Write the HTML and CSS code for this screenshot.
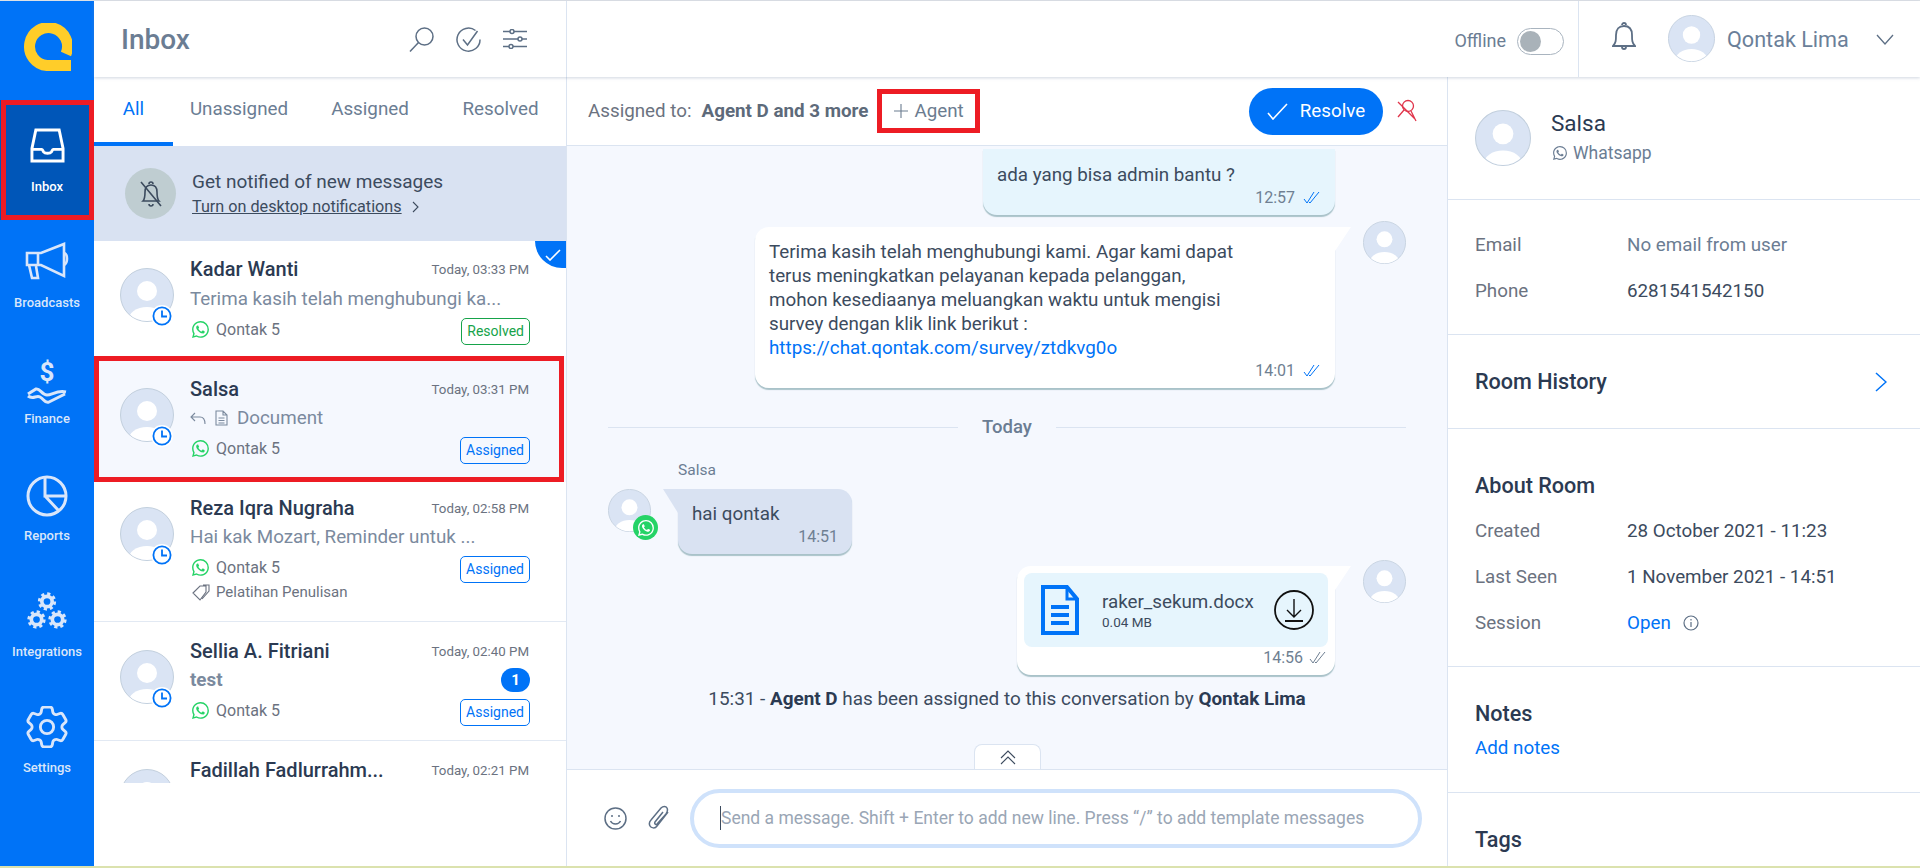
FILE: index.html
```html
<!DOCTYPE html>
<html lang="en">
<head>
	<meta charset="utf-8" />
	<title>Qontak Inbox</title>
	<link rel="stylesheet" href="styles.css">
</head>
<body>
	<svg class="defs" width="0" height="0">
		<defs>
			<clipPath id="avatarClip"><circle cx="27" cy="27" r="26"/></clipPath>
			<symbol id="avatar" viewBox="0 0 54 54">
				<circle cx="27" cy="27" r="26.5" fill="#dae4f4" stroke="#c2cfdd"/>
				<g clip-path="url(#avatarClip)" fill="#fff">
					<circle cx="27" cy="23" r="10"/>
					<ellipse cx="27" cy="53" rx="19" ry="14"/>
				</g>
			</symbol>
			<symbol id="whatsapp" viewBox="0 0 16 16">
				<path fill="currentColor" d="M13.601 2.326A7.854 7.854 0 0 0 7.994 0C3.627 0 .068 3.558.064 7.926c0 1.399.366 2.76 1.057 3.965L0 16l4.204-1.102a7.933 7.933 0 0 0 3.79.965h.004c4.368 0 7.926-3.558 7.93-7.93A7.898 7.898 0 0 0 13.6 2.326zM7.994 14.521a6.573 6.573 0 0 1-3.356-.92l-.24-.144-2.494.654.666-2.433-.156-.251a6.56 6.56 0 0 1-1.007-3.505c0-3.626 2.957-6.584 6.591-6.584a6.56 6.56 0 0 1 4.66 1.931 6.557 6.557 0 0 1 1.928 4.66c-.004 3.639-2.961 6.592-6.592 6.592zm3.615-4.934c-.197-.099-1.17-.578-1.353-.646-.182-.065-.315-.099-.445.099-.133.197-.513.646-.627.775-.114.133-.232.148-.43.05-.197-.1-.836-.308-1.592-.985-.59-.525-.985-1.175-1.103-1.372-.114-.198-.011-.304.088-.403.087-.088.197-.232.296-.346.1-.114.133-.198.198-.33.065-.134.034-.248-.015-.347-.05-.099-.445-1.076-.612-1.47-.16-.389-.323-.335-.445-.34-.114-.007-.247-.007-.38-.007a.729.729 0 0 0-.529.247c-.182.198-.691.677-.691 1.654 0 .977.71 1.916.81 2.049.098.133 1.394 2.132 3.383 2.992.47.205.84.326 1.129.418.475.152.904.129 1.246.08.38-.058 1.171-.48 1.338-.943.164-.464.164-.86.114-.943-.049-.084-.182-.133-.38-.232z"/>
			</symbol>
			<symbol id="clock" viewBox="0 0 22 22">
				<circle cx="11" cy="11" r="11" fill="#fff"/>
				<circle cx="11" cy="11" r="8.6" fill="#fff" stroke="#0073f7" stroke-width="1.8"/>
				<path d="M11 5.5V11.5H16" fill="none" stroke="#0073f7" stroke-width="1.8"/>
			</symbol>
			<symbol id="ticks" viewBox="0 0 18 14">
				<path d="M1 8l3 4 7-11M6 11l1 1 9-11" fill="none" stroke="currentColor" stroke-width="1"/>
			</symbol>
			<symbol id="gear" viewBox="0 0 22 22">
				<circle cx="11" cy="11" r="8.8" fill="none" stroke="currentColor" stroke-width="3.6" stroke-dasharray="3.6 3.3"/>
				<circle cx="11" cy="11" r="6" fill="none" stroke="currentColor" stroke-width="4.200"/>
			</symbol>
		</defs>
	</svg>

	<div class="app">
		<nav class="sidebar">
			<div class="logo">
				<svg width="50" height="50" viewBox="0 0 50 50"><path d="M44 31A19 19 0 1 0 25 42.5H49" fill="none" stroke="#ffcd29" stroke-width="11"/></svg>
			</div>
			<a class="nav-item active">
				<svg width="35" height="35" viewBox="0 0 36 36" fill="none" stroke="currentColor" stroke-width="3"><path d="M6 2H30L34 21V34H2V21z"/><path d="M2 22H12C13 22 13 23 14 24.500 14.700 25.500 15.500 26 18 26S21.300 25.500 22 24.500C23 23 23 22 24 22H34"/></svg>
				<span>Inbox</span>
				<i class="mark"></i>
			</a>
			<a class="nav-item">
				<svg width="44" height="38" viewBox="0 0 44 38" fill="none" stroke="currentColor" stroke-width="2.6"><path d="M2 11H16L39 2V34L16 23H2z"/><path d="M13 11V23M4 23L7 36H13L11 24M39 11C43 12 43 21 39 23"/></svg>
				<span>Broadcasts</span>
			</a>
			<a class="nav-item">
				<svg width="44" height="46" viewBox="0 0 44 46" fill="none" stroke="currentColor" stroke-width="3"><text x="22" y="22" font-family="Roboto" font-size="26" font-weight="700" text-anchor="middle" fill="currentColor" stroke="none">$</text><path d="M3 35L11 30C15 29 17 36 22 36S32 31 41 33M3 37C8 41 11 36 15 38S20 45 24 43L40 35"/></svg>
				<span>Finance</span>
			</a>
			<a class="nav-item">
				<svg width="42" height="42" viewBox="0 0 42 42" fill="none" stroke="currentColor" stroke-width="3"><circle cx="21" cy="21" r="19"/><path d="M19 2V21H40M19 21L33 36"/></svg>
				<span>Reports</span>
			</a>
			<a class="nav-item">
				<svg class="gears" width="42" height="37" viewBox="0 0 42 37"><use href="#gear" x="11.500" y="0" width="19" height="19"/><use href="#gear" x="1" y="18" width="19" height="19"/><use href="#gear" x="22" y="18" width="19" height="19"/></svg>
				<span>Integrations</span>
			</a>
			<a class="nav-item nav-settings">
				<svg width="42" height="42" viewBox="2.500 2.500 19 19" fill="none" stroke="currentColor" stroke-width="1.300"><path d="M9.594 3.940c.09-.542.56-.94 1.110-.94h2.593c.55 0 1.020.398 1.110.94l.213 1.281c.063.374.313.686.645.870.074.04.147.083.22.127.325.196.72.257 1.075.124l1.217-.456a1.125 1.125 0 0 1 1.370.49l1.296 2.247a1.125 1.125 0 0 1-.26 1.431l-1.003.827c-.293.241-.438.613-.43.992a7.723 7.723 0 0 1 0 .255c-.008.378.137.75.43.991l1.004.827c.424.35.534.955.26 1.430l-1.298 2.247a1.125 1.125 0 0 1-1.369.491l-1.217-.456c-.355-.133-.75-.072-1.076.124a6.470 6.470 0 0 1-.22.128c-.331.183-.581.495-.644.869l-.213 1.281c-.09.543-.56.94-1.110.94h-2.594c-.55 0-1.019-.398-1.110-.94l-.213-1.281c-.062-.374-.312-.686-.644-.87a6.520 6.520 0 0 1-.22-.127c-.325-.196-.72-.257-1.076-.124l-1.217.456a1.125 1.125 0 0 1-1.369-.49l-1.297-2.247a1.125 1.125 0 0 1 .26-1.431l1.004-.827c.292-.24.437-.613.43-.991a6.932 6.932 0 0 1 0-.255c.007-.38-.138-.751-.43-.992l-1.004-.827a1.125 1.125 0 0 1-.26-1.430l1.297-2.247a1.125 1.125 0 0 1 1.370-.491l1.216.456c.356.133.751.072 1.076-.124.072-.044.146-.086.22-.128.332-.183.582-.495.644-.869l.214-1.280z"/><circle cx="12" cy="12" r="3"/></svg>
				<span>Settings</span>
			</a>
		</nav>

		<div class="main">
			<header class="topbar">
				<div class="topbar-left">
					<h1>Inbox</h1>
					<div class="topbar-tools">
						<svg width="25" height="25" viewBox="0 0 25 25" fill="none" stroke="#5d6f85" stroke-width="1.500"><circle cx="15.500" cy="9.500" r="8.500"/><path d="M9.500 15.500L1 24.500"/></svg>
						<svg width="25" height="25" viewBox="0 0 25 25" fill="none" stroke="#5d6f85" stroke-width="1.500"><path d="M19.500 3.500A11.500 11.500 0 1 0 24 12.500"/><path d="M7 12.500L11.500 18L21.500 4"/></svg>
						<svg width="24" height="20" viewBox="0 0 24 20" fill="none" stroke="#5d6f85" stroke-width="1.500"><path d="M0 2.500H24M0 10H24M0 17.500H24"/><circle cx="9" cy="2.500" r="2" fill="#fff"/><circle cx="17" cy="10" r="2" fill="#fff"/><circle cx="8" cy="17.500" r="2" fill="#fff"/></svg>
					</div>
				</div>
				<div class="topbar-right">
					<div class="status">
						<span>Offline</span>
						<span class="toggle"><i></i></span>
					</div>
					<div class="user">
						<svg class="bell" width="24" height="29" viewBox="0 0 24 29" fill="none" stroke="#5d6f85" stroke-width="1.800"><path d="M1 24C4 21 4 18 4 13C4 7 7 4 12 4S20 7 20 13C20 18 20 21 23 24z"/><path d="M10 3a2 2 0 0 1 4 0M10 25a2 2 0 0 0 4 0"/></svg>
						<svg class="user-avatar" width="47" height="47"><use href="#avatar"/></svg>
						<span class="user-name">Qontak Lima</span>
						<svg width="18" height="11" viewBox="0 0 18 11" fill="none" stroke="#5d6f85" stroke-width="1.300"><path d="M1 1L9 10L17 1"/></svg>
					</div>
				</div>
			</header>

			<div class="panes">
				<section class="list-pane">
					<div class="tabs">
						<a class="tab active">All</a>
						<a class="tab">Unassigned</a>
						<a class="tab">Assigned</a>
						<a class="tab">Resolved</a>
					</div>
					<div class="notify">
						<div class="notify-icon">
							<svg width="26" height="28" viewBox="0 0 26 28" fill="none" stroke="#3c4b5e" stroke-width="1.600"><path d="M5 21C7 19 7 16 7 12C7 7 9 5 13 5S19 7 19 12C19 16 19 19 21 21z"/><path d="M11 24a2 2 0 0 0 4 0M11 4a2 2 0 0 1 4 0M3 2L23 26"/></svg>
						</div>
						<div>
							<div class="notify-title">Get notified of new messages</div>
							<div class="notify-link"><u>Turn on desktop notifications</u><svg width="7" height="12" viewBox="0 0 7 12" fill="none" stroke="#3c4b5e" stroke-width="1.100"><path d="M1 1L6 6L1 11"/></svg></div>
						</div>
					</div>
					<div class="rooms">
						<article class="room room-kadar">
							<span class="room-check"><svg width="16" height="12" viewBox="0 0 16 12" fill="none" stroke="#fff" stroke-width="1.600"><path d="M1 7L5 11L15 1"/></svg></span>
							<div class="room-avatar"><svg width="54" height="54"><use href="#avatar"/></svg><svg class="room-clock" width="22" height="22"><use href="#clock"/></svg></div>
							<div class="room-body">
								<div class="room-line"><strong class="room-name">Kadar Wanti</strong><time>Today, 03:33 PM</time></div>
								<div class="room-preview">Terima kasih telah menghubungi ka...</div>
								<div class="room-line room-channel"><span class="channel"><svg class="wa" width="17" height="17"><use href="#whatsapp"/></svg>Qontak 5</span><span class="badge resolved">Resolved</span></div>
							</div>
						</article>
						<article class="room room-salsa">
							<div class="room-avatar"><svg width="54" height="54"><use href="#avatar"/></svg><svg class="room-clock" width="22" height="22"><use href="#clock"/></svg></div>
							<div class="room-body">
								<div class="room-line"><strong class="room-name">Salsa</strong><time>Today, 03:31 PM</time></div>
								<div class="room-preview doc-preview">
									<svg width="16" height="13" viewBox="0 0 16 13" fill="none" stroke="#7b8a9e" stroke-width="1.100"><path d="M5 1L1 5L5 9M1 5H10C13 5 15 7 15 12"/></svg>
									<svg width="13" height="16" viewBox="0 0 13 16" fill="none" stroke="#7b8a9e" stroke-width="1.100"><path d="M1 1H8L12 5V15H1zM8 1V5H12M3.500 8H9.500M3.500 10.500H9.500M3.500 13H9.500"/></svg>
									Document
								</div>
								<div class="room-line room-channel"><span class="channel"><svg class="wa" width="17" height="17"><use href="#whatsapp"/></svg>Qontak 5</span><span class="badge">Assigned</span></div>
							</div>
							<i class="mark"></i>
						</article>
						<article class="room room-reza">
							<div class="room-avatar"><svg width="54" height="54"><use href="#avatar"/></svg><svg class="room-clock" width="22" height="22"><use href="#clock"/></svg></div>
							<div class="room-body">
								<div class="room-line"><strong class="room-name">Reza Iqra Nugraha</strong><time>Today, 02:58 PM</time></div>
								<div class="room-preview">Hai kak Mozart, Reminder untuk ...</div>
								<div class="room-line room-channel"><span class="channel"><svg class="wa" width="17" height="17"><use href="#whatsapp"/></svg>Qontak 5</span><span class="badge">Assigned</span></div>
								<div class="room-tag"><svg width="18" height="17" viewBox="0 0 18 17" fill="none" stroke="#6b7280" stroke-width="1.100"><path d="M1 9L8 2H14V8L8 16zM11 1H17V7L10 15"/></svg>Pelatihan Penulisan</div>
							</div>
						</article>
						<article class="room room-sellia">
							<div class="room-avatar"><svg width="54" height="54"><use href="#avatar"/></svg><svg class="room-clock" width="22" height="22"><use href="#clock"/></svg></div>
							<div class="room-body">
								<div class="room-line"><strong class="room-name">Sellia A. Fitriani</strong><time>Today, 02:40 PM</time></div>
								<div class="room-line room-unread"><span class="room-preview unread">test</span><span class="count">1</span></div>
								<div class="room-line room-channel"><span class="channel"><svg class="wa" width="17" height="17"><use href="#whatsapp"/></svg>Qontak 5</span><span class="badge">Assigned</span></div>
							</div>
						</article>
						<article class="room room-fadillah">
							<div class="room-avatar"><svg width="54" height="54"><use href="#avatar"/></svg></div>
							<div class="room-body">
								<div class="room-line"><strong class="room-name">Fadillah Fadlurrahm...</strong><time>Today, 02:21 PM</time></div>
							</div>
						</article>
					</div>
				</section>

				<section class="chat-pane">
					<div class="chat-head">
						<span class="assigned-label">Assigned to:</span>
						<strong class="assigned-names">Agent D and 3 more</strong>
						<span class="add-agent"><svg width="14" height="14" viewBox="0 0 14 14" stroke="#6b7c90" stroke-width="1.100"><path d="M7 0V14M0 7H14"/></svg>Agent<i class="mark"></i></span>
						<button class="resolve"><svg width="21" height="17" viewBox="0 0 21 17" fill="none" stroke="#fff" stroke-width="1.600"><path d="M1 10L6 16L20 1"/></svg>Resolve</button>
						<svg class="unpin" width="24" height="24" viewBox="0 0 24 24" fill="none" stroke="#e0344a" stroke-width="1.300"><circle cx="13" cy="7" r="5.500"/><path d="M9 11L3 18M16 12L21 22M3 3L20 20"/></svg>
					</div>

					<div class="chat-scroll">
						<div class="msg out first">
							<div class="bubble tinted">
								<p>ada yang bisa admin bantu ?</p>
								<div class="meta">12:57<svg class="tick" width="18" height="14"><use href="#ticks"/></svg></div>
							</div>
						</div>
						<div class="msg out">
							<div class="bubble tailed long">
								<p>Terima kasih telah menghubungi kami. Agar kami dapat<br>terus meningkatkan pelayanan kepada pelanggan,<br>mohon kesediaanya meluangkan waktu untuk mengisi<br>survey dengan klik link berikut :<br><a href="#">https://chat.qontak.com/survey/ztdkvg0o</a></p>
								<div class="meta">14:01<svg class="tick" width="18" height="14"><use href="#ticks"/></svg></div>
							</div>
							<svg class="msg-avatar" width="43" height="43"><use href="#avatar"/></svg>
						</div>
						<div class="day"><span>Today</span></div>
						<div class="sender">Salsa</div>
						<div class="msg in">
							<div class="msg-from">
								<svg width="43" height="43"><use href="#avatar"/></svg>
								<span class="wa-dot"><svg width="16" height="16"><use href="#whatsapp"/></svg></span>
							</div>
							<div class="bubble incoming">
								<p>hai qontak</p>
								<div class="meta">14:51</div>
							</div>
						</div>
						<div class="msg out file-msg">
							<div class="bubble tailed file-bubble">
								<div class="file">
									<svg width="38" height="50" viewBox="0 0 38 50" fill="none" stroke="#0073f7"><path d="M2 2H26L36 14V48H2z" stroke-width="4"/><path d="M26 2V14H36" stroke-width="3"/><path d="M10 22H28M10 30H28M10 38H28" stroke-width="4"/></svg>
									<div class="file-info">
										<div class="file-name">raker_sekum.docx</div>
										<div class="file-size">0.04 MB</div>
									</div>
									<svg width="40" height="40" viewBox="0 0 40 40" fill="none" stroke="#111"><circle cx="20" cy="20" r="19" stroke-width="1.800"/><path d="M20 9V26M13 20L20 27L27 20" stroke-width="1.400"/><path d="M11 31H29" stroke-width="2"/></svg>
								</div>
								<div class="meta">14:56<svg class="tick read" width="18" height="14"><use href="#ticks"/></svg></div>
							</div>
							<svg class="msg-avatar" width="43" height="43"><use href="#avatar"/></svg>
						</div>
						<div class="system">15:31 - <b>Agent D</b> has been assigned to this conversation by <b>Qontak Lima</b></div>
						<div class="collapse-tab"><svg width="16" height="15" viewBox="0 0 16 15" fill="none" stroke="#3c4b5e" stroke-width="1.100"><path d="M1 8L8 1L15 8M1 14L8 7L15 14"/></svg></div>
					</div>

					<div class="composer">
						<svg width="23" height="25" viewBox="0 0 23 25" fill="none" stroke="#5d6f85" stroke-width="1.500"><circle cx="11.500" cy="12.500" r="10.500"/><circle cx="8" cy="10" r="1" fill="#5d6f85" stroke="none"/><circle cx="15" cy="10" r="1" fill="#5d6f85" stroke="none"/><path d="M6.500 15C8.500 19 14.500 19 16.500 15"/></svg>
						<svg width="23" height="26" viewBox="0 0 23 26" fill="none" stroke="#5d6f85" stroke-width="1.500"><path d="M20 7L9 21C7 24 3 23 2 21S1 17 3 15L13 3C15 1 18 1 19 3S20 6 18 9L9 19C8 20 6 19 7 17L15 7"/></svg>
						<div class="input"><i class="caret"></i><span>Send a message. Shift + Enter to add new line. Press “/” to add template messages</span></div>
					</div>
				</section>

				<aside class="info-pane">
					<div class="info-block contact">
						<svg width="56" height="56"><use href="#avatar"/></svg>
						<div class="contact-text">
							<div class="contact-name">Salsa</div>
							<div class="contact-channel"><svg width="14" height="14"><use href="#whatsapp"/></svg>Whatsapp</div>
						</div>
					</div>
					<div class="info-block fields fields-contact">
						<div class="field"><span>Email</span><span class="muted">No email from user</span></div>
						<div class="field"><span>Phone</span><span class="val">6281541542150</span></div>
					</div>
					<div class="info-block history">
						<h2>Room History</h2>
						<svg width="12" height="20" viewBox="0 0 12 20" fill="none" stroke="#0073f7" stroke-width="1.500"><path d="M1 1L11 10L1 19"/></svg>
					</div>
					<div class="info-block about">
						<h2>About Room</h2>
						<div class="field"><span>Created</span><span class="val">28 October 2021 - 11:23</span></div>
						<div class="field"><span>Last Seen</span><span class="val">1 November 2021 - 14:51</span></div>
						<div class="field"><span>Session</span><span class="session"><a href="#">Open</a><svg width="16" height="16" viewBox="0 0 16 16" fill="none" stroke="#5d6f85" stroke-width="1.200"><circle cx="8" cy="8" r="7"/><path d="M8 7V12M8 4V5.500"/></svg></span></div>
					</div>
					<div class="info-block notes">
						<h2>Notes</h2>
						<a href="#">Add notes</a>
					</div>
					<div class="info-block tags">
						<h2>Tags</h2>
					</div>
				</aside>
			</div>
		</div>
	</div>
	<div class="page-edge"></div>
</body>
</html>
```
FILE: styles.css
```css
* {
	box-sizing: border-box;
}
html, body {
	height: 100%;
}
body {
	margin: 0;
	overflow: hidden;
	background: #fff;
	font-family: Roboto, sans-serif;
	color: #2b3a52;
}
a {
	color: #0073f7;
	text-decoration: none;
}
p, h1, h2 {
	margin: 0;
}
svg {
	display: block;
	flex: none;
}
i {
	font-style: normal;
}
.defs {
	position: absolute;
}
.app {
	display: flex;
	height: 866px;
	border-top: 1px solid #dde1e6;
}
.page-edge {
	height: 2px;
	background: #dbe2ae;
}
/* red boxes drawn over the screenshot */
.mark {
	position: absolute;
	border: 5px solid #ed1c24;
	pointer-events: none;
}

/* sidebar */
.sidebar {
	width: 94px;
	flex: none;
	background: #0073f7;
	color: #d9e6fa;
}
.logo {
	display: flex;
	justify-content: center;
	height: 99px;
	padding-top: 22px;
}
.nav-item {
	position: relative;
	display: flex;
	flex-direction: column;
	align-items: center;
	height: 116.4px;
	padding: 26px 0 23px;
	color: inherit;
	font-size: 13px;
	line-height: 15px;
	font-weight: 500;
}
.nav-item span {
	margin-top: auto;
	white-space: nowrap;
}
.nav-item.active {
	background: #0056b8;
	color: #fff;
	height: 120px;
	margin-bottom: -3.6px;
	padding: 28px 0 26px;
	z-index: 1;
}
.nav-settings {
	padding-top: 24px;
}
.nav-item .mark {
	inset: 0 0 0 1px;
}
.gears {
	color: #d9e6fa;
}

/* top bar */
.main {
	flex: 1;
	display: flex;
	flex-direction: column;
	min-width: 0;
}
.topbar {
	display: flex;
	height: 76px;
	flex: none;
	box-shadow: 0 1px 3px rgba(120, 140, 170, .35);
	position: relative;
	z-index: 2;
	background: #fff;
}
.topbar-left {
	width: 473px;
	flex: none;
	display: flex;
	align-items: center;
	padding: 0 39px 0 27px;
	border-right: 1px solid #dbe4f1;
}
h1 {
	font-size: 28px;
	font-weight: 500;
	color: #6b7d93;
}
.topbar-tools {
	margin-left: auto;
	display: flex;
	align-items: center;
	gap: 22px;
}
.topbar-right {
	flex: 1;
	display: flex;
	justify-content: flex-end;
}
.status {
	display: flex;
	align-items: center;
	gap: 11px;
	padding: 2px 14px 0 0;
	border-right: 1px solid #dbe4f1;
	font-size: 18px;
	color: #6b7d93;
}
.toggle {
	width: 47px;
	height: 27px;
	border: 1px solid #a9b4bf;
	border-radius: 14px;
	padding: 2px;
	margin-top: 2px;
}
.toggle i {
	display: block;
	width: 21px;
	height: 21px;
	border-radius: 50%;
	background: #a9b2b9;
}
.user {
	display: flex;
	align-items: center;
	padding-left: 33px;
	width: 341px;
	flex: none;
	font-size: 21.6px;
	color: #6b7f99;
}
.bell {
	margin-top: -6px;
}
.user-avatar {
	margin-left: 32px;
	margin-top: -1px;
}
.user-name {
	margin-left: 12px;
	margin-right: 27px;
	white-space: nowrap;
}

/* list */
.panes {
	flex: 1;
	display: flex;
	min-height: 0;
}
.list-pane {
	width: 473px;
	flex: none;
	border-right: 1px solid #dbe4f1;
	display: flex;
	flex-direction: column;
}
.tabs {
	display: flex;
	height: 69px;
	flex: none;
}
.tab {
	color: #6b7d93;
	font-size: 18.8px;
	padding-top: 21px;
	text-align: center;
}
.tab:nth-child(1) { width: 79px; color: #0073f7; border-bottom: 4px solid #0073f7; }
.tab:nth-child(2) { width: 132px; }
.tab:nth-child(3) { width: 130px; }
.tab:nth-child(4) { width: 131px; }
.notify {
	height: 95px;
	flex: none;
	background: #d9e2f2;
	display: flex;
	align-items: center;
	padding-left: 31px;
	gap: 16px;
}
.notify-icon {
	width: 51px;
	height: 51px;
	border-radius: 50%;
	background: #bfcdd1;
	display: flex;
	align-items: center;
	justify-content: center;
}
.notify-title {
	font-size: 19px;
	line-height: 24px;
	color: #3c4b5e;
}
.notify-link {
	display: flex;
	align-items: center;
	gap: 10px;
	font-size: 16.2px;
	line-height: 20px;
	margin-top: 3px;
	color: #3c4b5e;
}
.rooms {
	height: 542px;
	overflow: hidden;
	flex: none;
}
.room {
	position: relative;
	display: flex;
	padding: 16px 36px 0 26px;
	border-bottom: 1px solid #e2e9f3;
	gap: 16px;
}
.room-kadar { height: 115px; border-bottom: 0; }
.room-salsa { height: 126px; background: #f5f8fe; padding-top: 21px; border-bottom: 0; }
.room-reza { height: 140px; padding-top: 14px; }
.room-sellia { height: 119px; padding-top: 17px; }
.room-fadillah { height: 80px; padding-top: 17px; }
.room .mark {
	inset: 0 2px 0 0;
}
.room-avatar {
	position: relative;
	width: 54px;
	height: 54px;
	margin-top: 11px;
	flex: none;
}
.room-clock {
	position: absolute;
	right: 1px;
	bottom: -5px;
}
.room-body {
	flex: 1;
	min-width: 0;
}
.room-line {
	display: flex;
	justify-content: space-between;
	align-items: center;
	height: 24px;
}
.room-name {
	font-size: 20px;
	font-weight: 500;
	color: #2b3a52;
}
time {
	font-size: 13.3px;
	margin-right: 1px;
	color: #6b7280;
}
.room-preview {
	font-size: 18.8px;
	line-height: 24px;
	margin-top: 5px;
	color: #7b8a9e;
}
.room-kadar .room-preview {
	margin-top: 6px;
}
.doc-preview {
	display: flex;
	align-items: center;
	gap: 9px;
	height: 24px;
}
.unread {
	font-weight: 700;
	margin-top: 0;
}
.room-unread {
	margin-top: 5px;
}
.count {
	width: 29px;
	height: 24px;
	border-radius: 12px;
	background: #0073f7;
	color: #fff;
	font-size: 15px;
	font-weight: 700;
	text-align: center;
	line-height: 24px;
}
.room-channel {
	margin-top: 6px;
}
.channel {
	display: flex;
	align-items: center;
	gap: 7px;
	font-size: 16px;
	color: #6b7280;
	margin-left: 2px;
}
.wa {
	color: #25d366;
}
.badge {
	height: 27px;
	padding: 0 5px;
	border: 1px solid #0073f7;
	border-radius: 5px;
	color: #0073f7;
	font-size: 14px;
	line-height: 25px;
	margin-top: 5px;
}
.badge.resolved {
	border-color: #16a34a;
	color: #16a34a;
}
.room-tag {
	display: flex;
	align-items: center;
	gap: 6px;
	margin: 4px 0 0 2px;
	font-size: 15px;
	color: #6b7280;
}
.room-check {
	position: absolute;
	top: 0;
	right: 0;
	width: 31px;
	height: 27px;
	background: #0073f7;
	border-bottom-left-radius: 27px;
	display: flex;
	align-items: center;
	justify-content: center;
	padding-left: 4px;
}

/* chat */
.chat-pane {
	width: 881px;
	flex: none;
	display: flex;
	flex-direction: column;
	border-right: 1px solid #dbe4f1;
}
.chat-head {
	display: flex;
	align-items: center;
	height: 69px;
	flex: none;
	padding: 0 28px 0 21px;
	border-bottom: 1px solid #dbe4f1;
	font-size: 18.8px;
	color: #6b7280;
}
.assigned-names {
	margin-left: 10px;
	font-weight: 700;
	color: #5d6a7a;
}
.add-agent {
	position: relative;
	display: flex;
	align-items: center;
	gap: 6px;
	margin-left: 9px;
	height: 44px;
	width: 103px;
	padding-left: 17px;
	color: #6b7c90;
}
.add-agent .mark {
	inset: 0;
}
.resolve {
	display: flex;
	align-items: center;
	justify-content: center;
	gap: 12px;
	margin-left: auto;
	width: 134px;
	height: 47px;
	border: 0;
	border-radius: 24px;
	background: #0073f7;
	color: #fff;
	font: 18.8px Roboto, sans-serif;
}
.unpin {
	margin-left: 12px;
}
.chat-scroll {
	position: relative;
	height: 623px;
	flex: none;
	background: #f5f8fe;
	padding: 3px 41px 0;
	overflow: hidden;
}
.msg {
	display: flex;
	align-items: flex-start;
	gap: 28px;
}
.msg.out {
	justify-content: flex-end;
	margin-top: 12px;
}
.msg.first {
	margin-top: 0;
	padding-right: 71px;
}
.msg-avatar {
	margin-top: -6px;
}
.bubble {
	position: relative;
	padding: 13px 14px 9px;
	border-radius: 14px;
	background: #fff;
	font-size: 18.8px;
	line-height: 24px;
	box-shadow: 0 2px 1px #a9c2c9;
	color: #3c4b5e;
}
.bubble.tinted {
	background: #e6f5fd;
	border-radius: 0 0 14px 14px;
	padding-top: 14px;
	width: 352px;
}
.bubble.long {
	width: 580px;
}
.bubble.tailed {
	border-top-right-radius: 0;
}
.bubble.tailed::after {
	content: "";
	position: absolute;
	top: 0;
	right: -16px;
	border-top: 24px solid #fff;
	border-right: 16px solid transparent;
}
.bubble.incoming {
	background: #d9e2f2;
	border-top-left-radius: 0;
	width: 174px;
}
.bubble.incoming::before {
	content: "";
	position: absolute;
	top: 0;
	left: -15px;
	border-top: 24px solid #d9e2f2;
	border-left: 15px solid transparent;
}
.meta {
	display: flex;
	align-items: center;
	justify-content: flex-end;
	gap: 8px;
	height: 16px;
	margin-top: 3px;
	font-size: 16px;
	color: #6f7f92;
}
.tick {
	color: #0073f7;
}
.tick.read {
	color: #6f7f92;
}
.day {
	display: flex;
	align-items: center;
	gap: 24px;
	margin-top: 28px;
	font-size: 18.5px;
	line-height: 22px;
	font-weight: 500;
	color: #6b7d93;
}
.day::before, .day::after {
	content: "";
	flex: 1;
	height: 1px;
	background: #dbe4f1;
}
.sender {
	margin: 23px 0 10px 70px;
	font-size: 15.5px;
	line-height: 18px;
	color: #6b7d93;
}
.msg.in {
	gap: 27px;
}
.msg-from {
	position: relative;
}
.wa-dot {
	position: absolute;
	left: 25px;
	top: 26px;
	width: 25px;
	height: 25px;
	border-radius: 50%;
	background: #25d366;
	color: #fff;
	display: flex;
	align-items: center;
	justify-content: center;
}
.file-bubble {
	width: 318px;
	padding: 7px 7px 9px;
}
.file {
	display: flex;
	align-items: center;
	height: 74px;
	padding: 0 14px 0 17px;
	border-radius: 8px;
	background: #e6f5fd;
}
.file-info {
	flex: 1;
	margin-left: 23px;
}
.file-name {
	line-height: 24px;
}
.file-size {
	font-size: 13.5px;
	line-height: 16px;
}
.file-bubble .meta {
	margin-right: 1px;
	gap: 6px;
}
.system {
	margin-top: 12px;
	text-align: center;
	font-size: 18.9px;
	line-height: 24px;
	color: #3c4b5e;
}
.system b {
	font-weight: 700;
	color: #2b3a52;
}
.collapse-tab {
	position: absolute;
	bottom: 0;
	left: 407px;
	width: 67px;
	height: 25px;
	background: #fff;
	border: 1px solid #dbe4f1;
	border-bottom: 0;
	border-radius: 8px 8px 0 0;
	display: flex;
	align-items: center;
	justify-content: center;
}
.composer {
	flex: 1;
	display: flex;
	align-items: center;
	gap: 21px;
	padding: 0 25px 0 37px;
	border-top: 1px solid #dbe4f1;
}
.input {
	flex: 1;
	height: 59px;
	margin-left: -2px;
	border: 4px solid #cfe2fb;
	border-radius: 30px;
	display: flex;
	align-items: center;
	padding-left: 26px;
	font-size: 17.5px;
	color: #9aa6b5;
}
.caret {
	width: 1px;
	height: 24px;
	background: #3c4b5e;
}

/* info */
.info-pane {
	flex: 1;
	min-width: 0;
}
.info-block {
	padding: 0 27px;
	border-bottom: 1px solid #dbe4f1;
}
h2 {
	font-size: 21.6px;
	font-weight: 500;
	line-height: 26px;
	color: #2b3a52;
}
.contact {
	display: flex;
	align-items: center;
	gap: 20px;
	height: 123px;
}
.contact-text {
	margin-top: -2px;
}
.contact-name {
	font-size: 22.5px;
	line-height: 26px;
}
.contact-channel {
	display: flex;
	align-items: center;
	gap: 6px;
	margin: 6px 0 0 2px;
	line-height: 22px;
	font-size: 17.5px;
	color: #6b7d93;
}
.fields-contact {
	height: 135px;
	padding-top: 33px;
}
.field {
	display: flex;
	height: 24px;
	line-height: 24px;
	margin-bottom: 22px;
	font-size: 18.8px;
	color: #6b7280;
}
.field span:first-child {
	width: 152px;
}
.field .muted {
	color: #6b7d93;
}
.field .val {
	color: #3c4b5e;
}
.session {
	display: flex;
	align-items: center;
	gap: 12px;
}
.history {
	display: flex;
	align-items: center;
	justify-content: space-between;
	height: 94px;
	padding-right: 33px;
}
.about {
	height: 238px;
	padding-top: 44px;
}
.about h2 {
	margin-bottom: 20px;
}
.notes {
	height: 126px;
	padding-top: 34px;
}
.notes a {
	display: block;
	margin-top: 9px;
	font-size: 18.8px;
	line-height: 24px;
}
.tags {
	padding-top: 34px;
	border-bottom: 0;
}
```
